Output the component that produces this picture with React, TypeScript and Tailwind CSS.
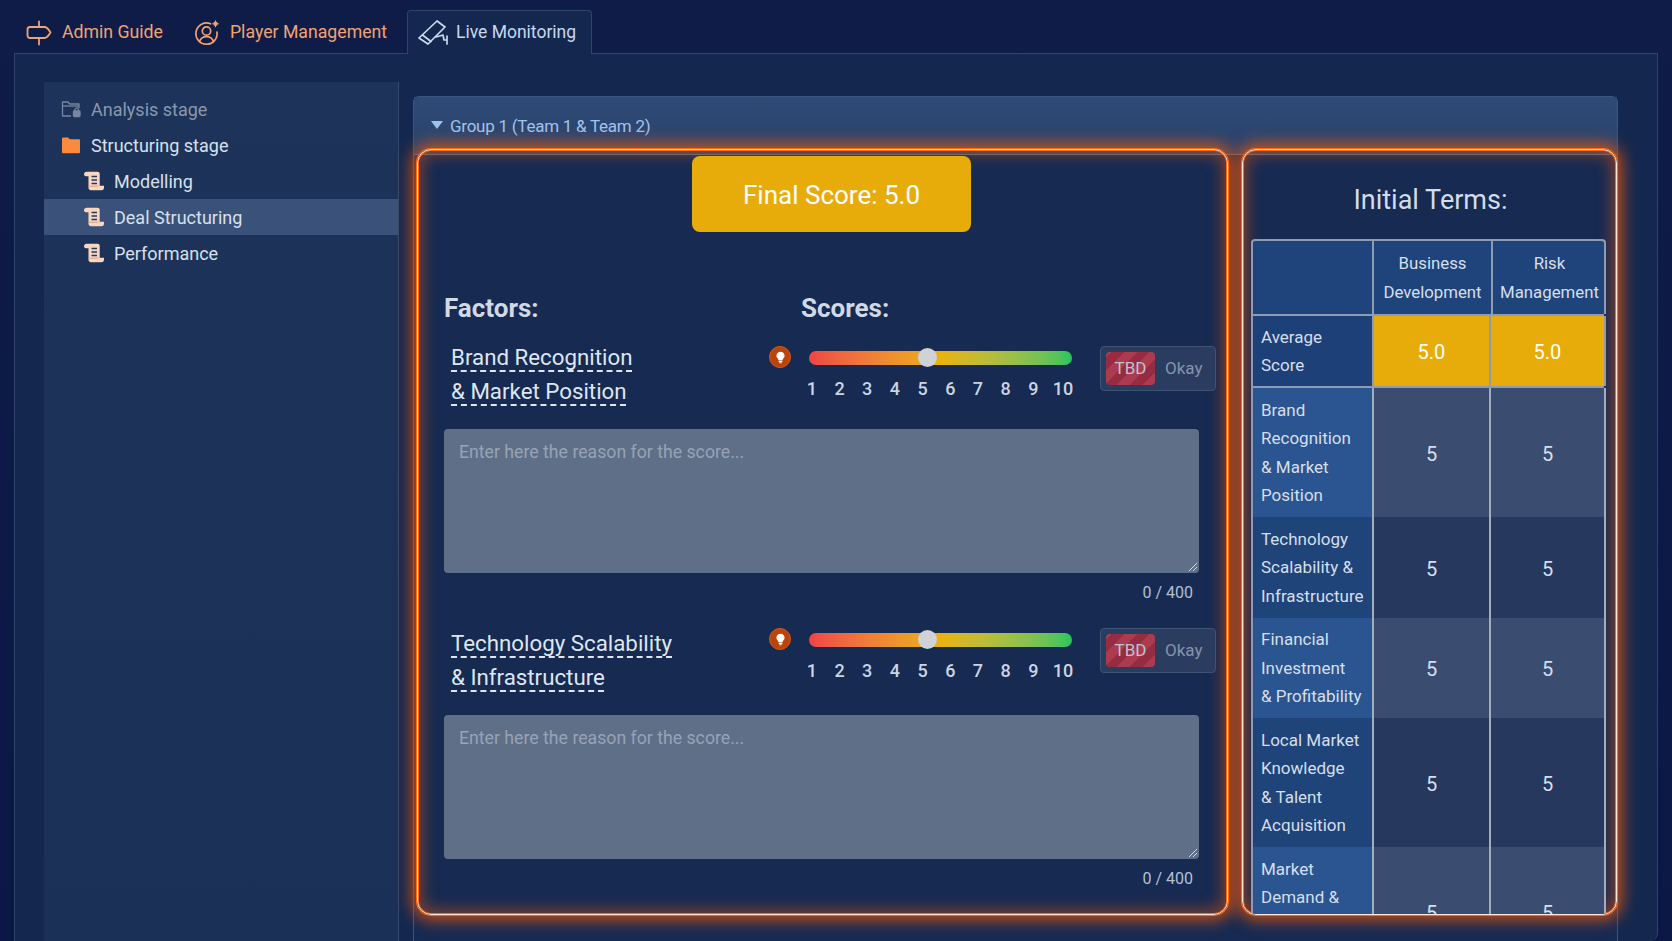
const Sign = () => (
  <svg viewBox="0 0 26 26" className="h-[26px] w-[26px]" fill="none" stroke="#f0a373" strokeWidth="1.8" strokeLinejoin="round">
    <path d="M4 7h14.500c2 0 4.500 3 6 5.500-1.500 2.500-4 5.500-6 5.500H4c-1.500 0-2.500-1-2.500-2.500v-6C1.500 8 2.500 7 4 7z" />
    <path d="M13 1.500V7M13 18v6.500" strokeLinecap="round" />
  </svg>
);
const Player = () => (
  <svg viewBox="0 0 26 26" className="h-[26px] w-[26px]" fill="none" stroke="#f0a373" strokeWidth="1.7" strokeLinecap="round">
    <path d="M16.500 3.800A10.600 10.600 0 1 0 23 12" />
    <circle cx="12.500" cy="11" r="4.200" />
    <path d="M5.400 21.600c1.200-3.300 4-5 7.100-5s5.900 1.700 7.100 5" />
    <circle cx="21.500" cy="3.800" r="1.600" fill="#f0a373" strokeWidth="1.200" />
    <path d="M21.500 0.800v1M21.500 5.800v1M18.600 3.800h1M23.500 3.800h1" strokeWidth="1" />
  </svg>
);
const Camera = () => (
  <svg viewBox="0 0 30 26" className="h-[26px] w-[30px]" fill="none" stroke="#c9d8ee" strokeWidth="1.700" strokeLinejoin="round" strokeLinecap="round">
    <path d="M1 19 19 2l8 6L10 25z" />
    <path d="M4.500 16 13 22.500" />
    <path d="M18 18l7-2 1 5h3M29 17v8" />
  </svg>
);
const LockFolder = () => (
  <svg viewBox="0 0 20 18" className="h-[18px] w-[20px]" fill="none" stroke="#7787a3" strokeWidth="1.300" strokeLinejoin="round">
    <path d="M10 16H1.500V2h5.500l1.700 2H18v4" />
    <path d="M1.500 6H18" />
    <rect x="12.500" y="11" width="6.500" height="5.500" rx="0.800" fill="#7787a3" />
    <path d="M14 11V9.600a1.700 1.700 0 0 1 3.400 0V11" />
  </svg>
);
const Folder = () => (
  <svg viewBox="0 0 20 18" className="h-[18px] w-[20px]" fill="#fb8a3c">
    <path d="M1 2.600A1.200 1.200 0 0 1 2.200 1.400h4.900l1.700 1.800h9.300A1 1 0 0 1 19 4.200v12a1 1 0 0 1-1 1H2a1 1 0 0 1-1-1z" />
  </svg>
);
const Scroll = () => (
  <svg viewBox="0 0 22 20" className="h-[20px] w-[22px]">
    <path d="M1 3.200C1 1.800 2.200.8 3.500.8h11c1.300 0 2.200.9 2.200 2.200v11.800H21v2c0 1.300-1 2.400-2.300 2.400H8c-1.400 0-2.500-1.100-2.500-2.500V5.200H3C1.900 5.200 1 4.300 1 3.200z" fill="#fbd5bd" />
    <path d="M8.500 5.500h5.500M8.500 9h5.500M8.500 12.500h5.500" stroke="#233a63" strokeWidth="1.700" />
    <path d="M5.500 15.200h10" stroke="#c99f8a" strokeWidth="0.800" />
  </svg>
);
const Bulb = () => (
  <span className="flex h-[22px] w-[22px] shrink-0 items-center justify-center rounded-full border border-[#e0560f] bg-[#b8450c]">
    <svg viewBox="0 0 12 14" className="h-[13px] w-[11px]" fill="#fff">
      <path d="M6 .6a4.400 4.400 0 0 0-2.500 8v1.300h5V8.600A4.400 4.400 0 0 0 6 .6z" />
      <rect x="3.900" y="10.600" width="4.200" height="1.200" rx=".5" />
      <rect x="4.600" y="12.200" width="2.800" height="1.200" rx=".5" />
    </svg>
  </span>
);

const ticks = ["1", "2", "3", "4", "5", "6", "7", "8", "9", "10"];

const Factor = ({ a, b, lift }: { a: string; b: string; lift: string }) => (
  <div className="h-[286px] shrink-0">
    <div className="flex h-[89px] items-start">
      <div className="ml-[7px] w-[318px] shrink-0 text-[22.3px] leading-[34px] text-[#dfe6f0]">
        <div><span className="underline decoration-dashed decoration-[1.5px] underline-offset-[5px]">{a}</span></div>
        <div><span className="underline decoration-dashed decoration-[1.5px] underline-offset-[5px]">{b}</span></div>
      </div>
      <div className={`flex items-start ${lift}`}>
        <div className="pt-[6px]"><Bulb /></div>
        <div className="ml-[18px] w-[263px] pt-[1px]">
          <div className="relative mt-[10px] h-[14px] rounded-full bg-gradient-to-r from-[#ef4444] via-[#eab308] to-[#22c55e]">
            <span className="absolute left-[109px] top-[-3px] h-[19px] w-[19px] rounded-full bg-[#cfd2d6]" />
          </div>
          <div className="-ml-[11px] mt-[14px] flex w-[290px] text-[18px] font-medium leading-[20px] text-[#cbd5e1]">
            {ticks.map((t) => <span key={t} className={t === "10" ? "w-[27.7px] shrink-0 pl-[4px] text-center" : "w-[27.7px] shrink-0 text-center"}>{t}</span>)}
          </div>
        </div>
        <div className="ml-[28px] mt-[6px] flex h-[45px] w-[116px] items-center rounded border border-[#3f5273] bg-[#2a3d60] pl-[5px] text-[17px]">
          <span className="flex h-[33px] w-[49px] items-center justify-center rounded bg-[repeating-linear-gradient(-45deg,#ad3b50_0_9px,#962c42_9px_18px)] text-[#bcc3d0]">TBD</span>
          <span className="ml-[10px] text-[#8693a9]">Okay</span>
        </div>
      </div>
    </div>
    <div className="relative flex h-[144px] w-[755px] rounded bg-[#5f6f87] px-[15px] py-[11px] text-[17.7px] leading-[24px] text-[#97a3b6]">
      Enter here the reason for the score...
      <svg viewBox="0 0 10 10" className="absolute bottom-[1px] right-[1px] h-[10px] w-[10px]" stroke="#d3d9e2" strokeWidth="1">
        <path d="M1 9 9 1M5 9l4-4" />
      </svg>
    </div>
    <div className="mt-[10px] w-[749px] text-right text-[16px] leading-[20px] text-[#b4c0d2]">0 / 400</div>
  </div>
);

type Row = { label: string[]; h: string; even: boolean };
const rows: Row[] = [
  { label: ["Brand", "Recognition", "& Market", "Position"], h: "h-[129px]", even: true },
  { label: ["Technology", "Scalability &", "Infrastructure"], h: "h-[101px]", even: false },
  { label: ["Financial", "Investment", "& Profitability"], h: "h-[100px]", even: true },
  { label: ["Local Market", "Knowledge", "& Talent", "Acquisition"], h: "h-[129px]", even: false },
  { label: ["Market", "Demand &", "Growth", "Potential"], h: "h-[129px]", even: true },
];

const glow = "border border-[#ffe6d2] rounded-[14px] shadow-[0_0_0_1px_#ff6a10,inset_0_0_0_1px_#ff6a10,0_0_16px_5px_rgba(255,90,0,0.75),inset_0_0_16px_4px_rgba(255,90,0,0.45)]";

export default function App() {
  return (
    <div className="flex h-[941px] w-[1672px] flex-col overflow-hidden bg-gradient-to-b from-[#0e1c47] to-[#0b1745] font-['Roboto',sans-serif] text-[18px]">
      <div className="flex h-[53px] shrink-0 items-end pl-[14px]">
        <div className="flex h-[43px] w-[393px] items-center pt-[2px] text-[17.7px] text-[#f0a373]">
          <span className="ml-[12px]"><Sign /></span>
          <span className="ml-[10px]">Admin Guide</span>
          <span className="ml-[31px]"><Player /></span>
          <span className="ml-[10px]">Player Management</span>
        </div>
        <div className="relative top-[1px] z-10 flex h-[44px] w-[185px] items-center rounded-t-sm border border-b-0 border-[#2f4468] bg-[#14284f] pb-[1px] pl-[10px] text-[17.5px] text-[#c9d8ee]">
          <Camera />
          <span className="ml-[8px]">Live Monitoring</span>
        </div>
      </div>
      <div className="mx-[14px] flex min-h-0 flex-1 rounded-br-lg border-l border-r border-t border-[#2f4468] bg-[#14284f] pl-[29px] pt-[28px]">
        <aside className="h-full w-[355px] shrink-0 border-r border-[#34496c] bg-gradient-to-b from-[#1d3359] to-[#1a3057] pt-[9px] text-[#d7e0ec]">
          <div className="flex h-[36px] items-center pl-[17px] text-[#8a98b0]"><LockFolder /><span className="ml-[10px]">Analysis stage</span></div>
          <div className="flex h-[36px] items-center pl-[17px]"><Folder /><span className="ml-[10px]">Structuring stage</span></div>
          <div className="flex h-[36px] items-center pl-[39px]"><Scroll /><span className="ml-[9px]">Modelling</span></div>
          <div className="flex h-[36px] items-center bg-[#3a5279] pl-[39px]"><Scroll /><span className="ml-[9px]">Deal Structuring</span></div>
          <div className="flex h-[36px] items-center pl-[39px]"><Scroll /><span className="ml-[9px]">Performance</span></div>
        </aside>
        <div className="ml-[14px] mt-[14px] flex w-[1205px] shrink-0 flex-col rounded-t-md border-l border-r border-t border-[#3b5480] bg-[#162a52]">
          <div className="flex h-[58px] shrink-0 items-start border-b border-[#55698a] bg-gradient-to-b from-[#2e4a76] to-[#29436d] pl-[17px] pt-[17px] text-[#a3c4ee]">
            <svg viewBox="0 0 12 8" className="mt-[7px] h-[8px] w-[12px]" fill="#9cc3f0"><path d="M0 0h12L6 8z" /></svg>
            <span className="ml-[7px] text-[17px] leading-[24px] tracking-[-0.25px]">Group 1 (Team 1 &amp; Team 2)</span>
          </div>
          <div className="-mt-[6px] flex min-h-0 flex-1 items-start pl-[3px]">
            <section className={`relative flex h-[766px] w-[811px] shrink-0 flex-col items-start pl-[26px] ${glow}`}>
              <div className="ml-[248px] mt-[6px] flex h-[76px] w-[279px] items-center justify-center rounded-lg bg-[#e8ac0a] pt-[2px] text-[26px] text-white">Final Score: 5.0</div>
              <div className="mt-[59px] flex h-[34px] items-center text-[26px] font-bold text-[#d0d9e5]">
                <span className="w-[357px]">Factors:</span>
                <span>Scores:</span>
              </div>
              <div className="mt-[15px]">
                <Factor a="Brand Recognition" b="& Market Position" lift="mt-0" />
                <Factor a="Technology Scalability" b="& Infrastructure" lift="-mt-[4px]" />
              </div>
            </section>
            <section className={`relative ml-[14px] flex h-[766px] w-[375px] shrink-0 flex-col overflow-hidden pl-[8px] ${glow}`}>
              <h2 className="flex h-[89px] w-[359px] shrink-0 items-center justify-center pt-[12px] text-[27px] font-normal text-[#d3dce8]">Initial Terms:</h2>
              <div className="w-[355px] min-h-0 flex-1 overflow-hidden text-[17px] leading-[28.5px] text-[#d6dfeb]">
                <div className="grid h-[75px] grid-cols-[121px_119px_115px] rounded-t-sm border-l-2 border-r-2 border-t-2 border-[#8d9cb3] bg-[#1f447c] text-center text-[16.8px]">
                  <div className="border-r-2 border-[#8d9cb3]" />
                  <div className="flex flex-col justify-center border-r-2 border-[#8d9cb3]"><span>Business</span><span>Development</span></div>
                  <div className="flex flex-col justify-center pr-[2px]"><span>Risk</span><span>Management</span></div>
                </div>
                <div className="grid h-[74px] w-[353px] grid-cols-[121px_117px_115px] border-b-2 border-l-2 border-t-2 border-[#8d9cb3] bg-[#1e4079]">
                  <div className="flex flex-col justify-center border-r-2 border-[#8d9cb3] pl-[8px]"><span>Average</span><span>Score</span></div>
                  <div className="flex items-center justify-center border-r-2 border-[#8d9cb3] bg-[#e8ac0a] pt-[3px] text-[20px] text-white">5.0</div>
                  <div className="flex items-center justify-center border-r-2 border-[#8d9cb3] bg-[#e8ac0a] pt-[3px] text-[20px] text-white">5.0</div>
                </div>
                {rows.map((r) => (
                  <div key={r.label[0]} className={`grid w-[353px] grid-cols-[121px_117px_115px] border-l-2 border-[#8d9cb3] ${r.h}`}>
                    <div className={`flex flex-col justify-center border-r-2 border-[#a3adbd] pl-[8px] ${r.even ? "bg-[#2a5590]" : "bg-[#1f447a]"}`}>
                      {r.label.map((l) => <span key={l}>{l}</span>)}
                    </div>
                    <div className={`flex items-center justify-center border-r-2 border-[#a3adbd] pt-[3px] text-[20px] ${r.even ? "bg-[#3a4d70]" : "bg-[#27385f]"}`}>5</div>
                    <div className={`flex items-center justify-center border-r-2 border-[#a3adbd] pt-[3px] text-[20px] ${r.even ? "bg-[#3a4d70]" : "bg-[#27385f]"}`}>5</div>
                  </div>
                ))}
              </div>
            </section>
          </div>
        </div>
      </div>
    </div>
  );
}
